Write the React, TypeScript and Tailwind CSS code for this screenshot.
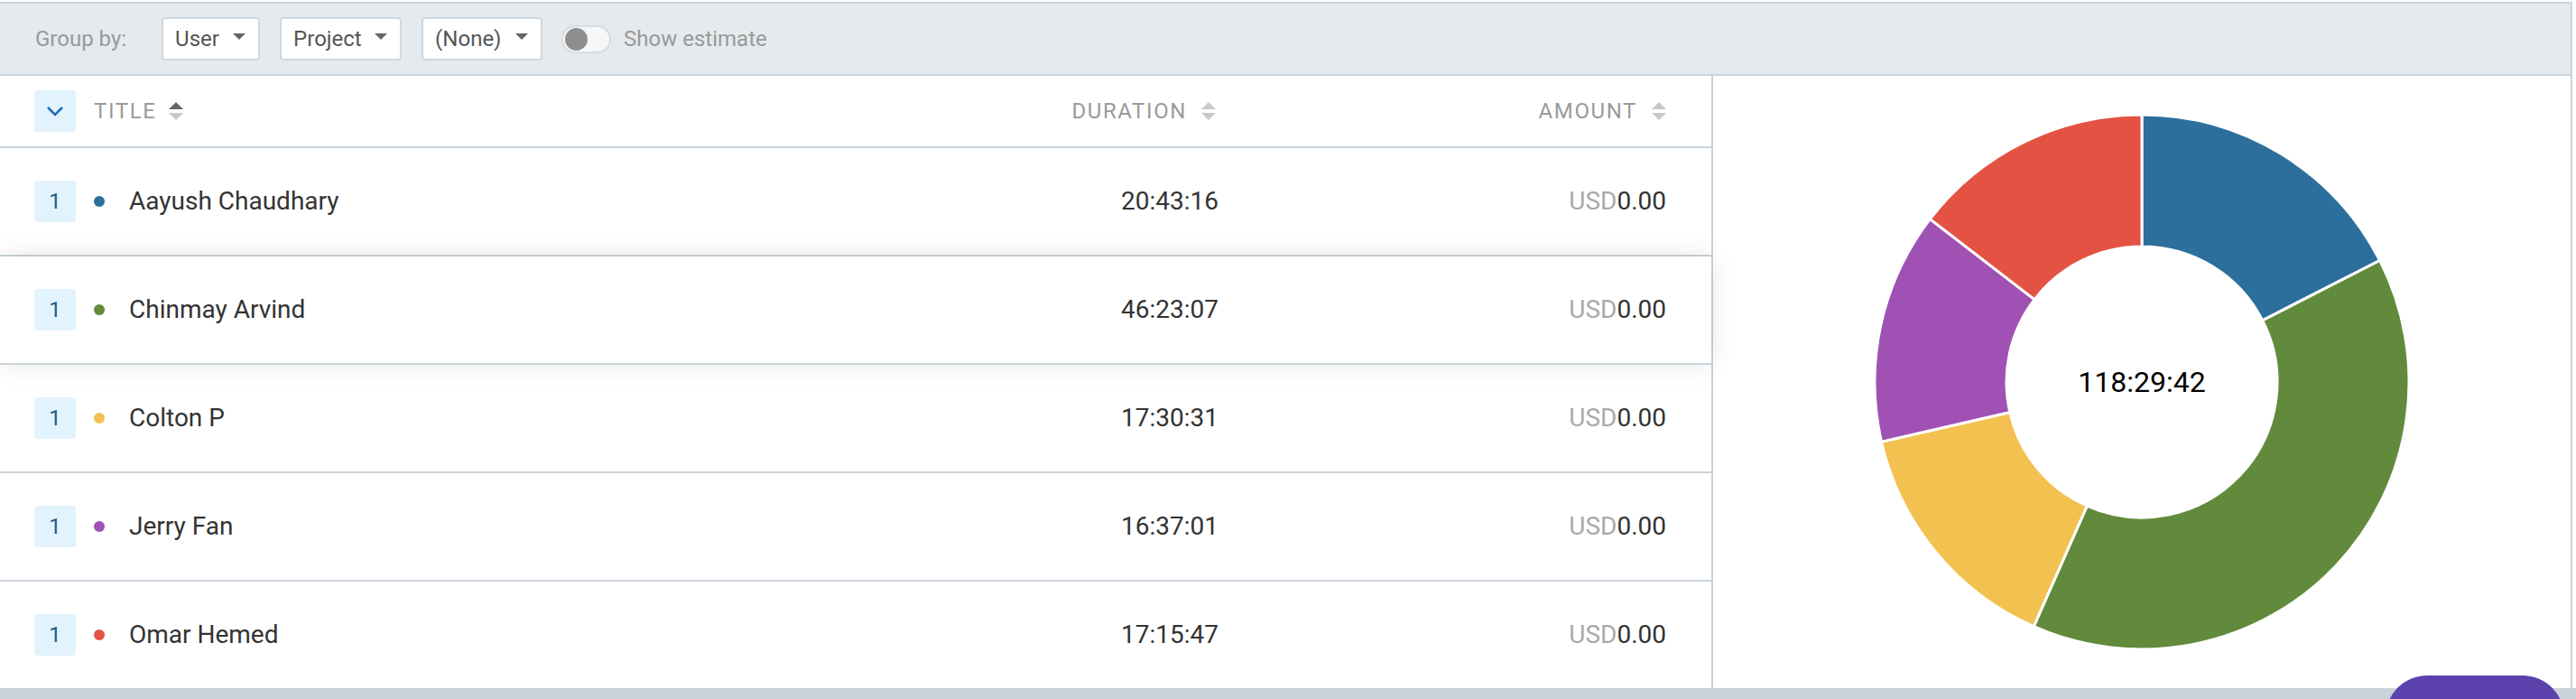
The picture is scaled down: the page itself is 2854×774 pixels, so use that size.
import React from "react";

type Row = { name: string; dur: string; secs: number; color: string };

const rows: Row[] = [
  { name: "Aayush Chaudhary", dur: "20:43:16", secs: 74596, color: "#2c6f9c" },
  { name: "Chinmay Arvind", dur: "46:23:07", secs: 166987, color: "#628a3d" },
  { name: "Colton P", dur: "17:30:31", secs: 63031, color: "#f2c14f" },
  { name: "Jerry Fan", dur: "16:37:01", secs: 59821, color: "#a051b4" },
  { name: "Omar Hemed", dur: "17:15:47", secs: 62147, color: "#e35243" },
];

function Caret() {
  return (
    <span className="block w-0 h-0 border-x-[7px] border-x-transparent border-t-[7px] border-t-[#666] -translate-y-[3px]" />
  );
}

function Dropdown({ label, w }: { label: string; w: string }) {
  return (
    <div
      className={`${w} h-[48px] bg-white border-2 border-[#cfd8df] rounded-[4px] flex items-center justify-between pl-[13px] pr-[14px] text-[24px] text-[#555]`}
    >
      <span>{label}</span>
      <Caret />
    </div>
  );
}

function SortIcon({ active }: { active?: boolean }) {
  return (
    <svg width="16" height="20" viewBox="0 0 16 20" className="shrink-0">
      <polygon points="0,8 8,0 16,8" fill={active ? "#666" : "#c8c8c8"} />
      <polygon points="0,12 8,20 16,12" fill="#c8c8c8" />
    </svg>
  );
}

function Donut() {
  const total = rows.reduce((s, r) => s + r.secs, 0);
  const cx = 300;
  const cy = 300;
  const R = 296;
  const r = 150;
  let a0 = 0;
  const pt = (ang: number, rad: number) => [cx + rad * Math.sin(ang), cy - rad * Math.cos(ang)];
  const paths = rows.map((row) => {
    const a1 = a0 + (row.secs / total) * Math.PI * 2;
    const [x0, y0] = pt(a0, R);
    const [x1, y1] = pt(a1, R);
    const [x2, y2] = pt(a1, r);
    const [x3, y3] = pt(a0, r);
    const large = a1 - a0 > Math.PI ? 1 : 0;
    const d = `M${x0} ${y0} A${R} ${R} 0 ${large} 1 ${x1} ${y1} L${x2} ${y2} A${r} ${r} 0 ${large} 0 ${x3} ${y3} Z`;
    a0 = a1;
    return <path key={row.name} d={d} fill={row.color} stroke="#fff" strokeWidth={3} strokeLinejoin="miter" />;
  });
  return (
    <div className="relative w-[600px] h-[600px]">
      <svg width="600" height="600" viewBox="0 0 600 600">
        {paths}
      </svg>
      <div className="absolute inset-0 flex items-center justify-center text-[32px] text-black">118:29:42</div>
    </div>
  );
}

export default function App() {
  return (
    <div className="w-[2854px] h-[774px] bg-white overflow-hidden relative font-['Roboto','Liberation_Sans',sans-serif]">
      <div className="pt-[2px]">
        <div className="w-[2850px] border-t-2 border-r-2 border-[#c9d3db]">
          {/* Toolbar */}
          <div className="h-[80px] bg-[#e4eaee] border-b-2 border-[#c9d3db] flex items-center pl-[39px]">
            <span className="text-[24px] text-[#999]">Group by:</span>
            <div className="ml-[39px] flex items-center gap-[22px]">
              <Dropdown label="User" w="w-[109px]" />
              <Dropdown label="Project" w="w-[135px]" />
              <Dropdown label="(None)" w="w-[134px]" />
            </div>
            <div className="ml-[21px] w-[55px] h-[31px] rounded-full bg-[#f5f7f9] border-2 border-[#d5dde3] flex items-center px-[2px]">
              <div className="w-[25px] h-[25px] rounded-full bg-[#8e8e8e]" />
            </div>
            <span className="ml-[14px] text-[24px] text-[#999]">Show estimate</span>
          </div>

          {/* Main */}
          <div className="flex h-[678px]">
            <div className="w-[1898px] border-r-2 border-[#c9d3db] flex flex-col">
              {/* Header */}
              <div className="h-[80px] border-b-2 border-[#c9d3db] flex items-center pl-[38px] pr-[50px] text-[24px] tracking-[1.6px] text-[#9a9a9a]">
                <div className="flex-1 flex items-center">
                  <div className="w-[46px] h-[46px] bg-[#e2f3fd] rounded-[4px] flex items-center justify-center">
                    <svg width="20" height="12" viewBox="0 0 20 12">
                      <polyline points="2,2 10,10 18,2" fill="none" stroke="#1f6fb5" strokeWidth="2.6" />
                    </svg>
                  </div>
                  <span className="ml-[20px]">TITLE</span>
                  <span className="ml-[14px]">
                    <SortIcon active />
                  </span>
                </div>
                <div className="w-[200px] flex items-center justify-end gap-[16px] pr-[3px]">
                  <span>DURATION</span>
                  <SortIcon />
                </div>
                <div className="w-[496px] flex items-center justify-end gap-[16px]">
                  <span>AMOUNT</span>
                  <SortIcon />
                </div>
              </div>

              {rows.map((row, i) => (
                <div
                  key={row.name}
                  className={
                    i === 4
                      ? "h-[118px] flex items-center pl-[38px] pr-[50px] bg-white"
                      : i === 1
                      ? "h-[120px] border-b-2 border-[#c9d3db] flex items-center pl-[38px] pr-[50px] bg-white relative z-10 shadow-[0_0_26px_rgba(0,0,0,0.10)]"
                      : "h-[120px] border-b-2 border-[#c9d3db] flex items-center pl-[38px] pr-[50px] bg-white"
                  }
                >
                  <div className="flex-1 flex items-center">
                    <div className="w-[46px] h-[46px] bg-[#e2f3fd] rounded-[4px] flex items-center justify-center text-[24px] text-[#245b87]">
                      1
                    </div>
                    <span className="ml-[20px] w-[12px] h-[12px] rounded-full" style={{ backgroundColor: row.color }} />
                    <span className="ml-[27px] text-[28px] text-[#333]">{row.name}</span>
                  </div>
                  <div className="w-[200px] text-right text-[28px] text-[#333]">{row.dur}</div>
                  <div className="w-[496px] text-right text-[28px] text-[#333]">
                    <span className="text-[#aaa]">USD</span>0.00
                  </div>
                </div>
              ))}
            </div>

            <div className="flex-1 bg-white flex items-center justify-center">
              <Donut />
            </div>
          </div>
        </div>
        <div className="h-[12px] bg-[#c9d3db] w-full" />
      </div>

      <div className="absolute left-[2643px] top-[748px] w-[198px] h-[80px] rounded-t-[46px] bg-[#5b42ad]" />
    </div>
  );
}
